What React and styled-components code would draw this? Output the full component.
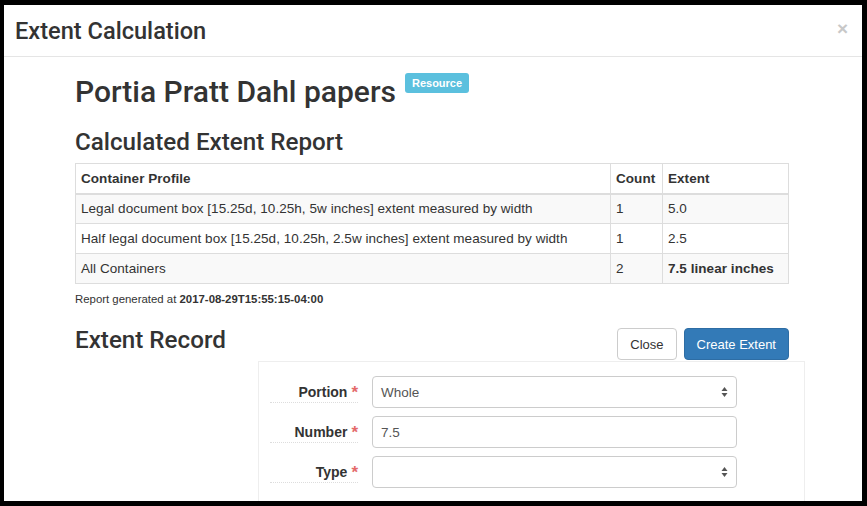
import React from 'react';
import styled, { createGlobalStyle } from 'styled-components';

const Global = createGlobalStyle`
  html, body { margin: 0; padding: 0; background: #000; }
  body { font-family: "Liberation Sans", Arial, sans-serif; color: #333; }
  * { box-sizing: border-box; }
`;

const headFont = `"Roboto", "Liberation Sans", Arial, sans-serif`;

const Frame = styled.div`
  width: 867px;
  height: 506px;
  padding: 5px 5px 5px 4px;
  background: #000;
`;

const Modal = styled.div`
  background: #fff;
  height: 100%;
  overflow: hidden;
  display: flex;
  flex-direction: column;
`;

const Header = styled.div`
  height: 52px;
  flex-shrink: 0;
  border-bottom: 1px solid #e5e5e5;
  display: flex;
  align-items: center;
  justify-content: space-between;
  padding: 0 14px 0 11px;
`;

const Title = styled.h4`
  margin: 0;
  font-family: ${headFont};
  font-size: 23.6px;
  font-weight: 500;
  color: #333;
`;

const CloseX = styled.span`
  font-size: 19px;
  font-weight: 700;
  color: #c8c8c8;
  line-height: 1;
  margin-top: -4px;
`;

const Body = styled.div`
  padding: 17px 73px 0 71px;
`;

const Heading = styled.h2`
  margin: 0;
  font-family: ${headFont};
  font-size: 30px;
  font-weight: 500;
  line-height: 36px;
  color: #333;
  display: flex;
  align-items: flex-start;
`;

const Badge = styled.span`
  margin-left: 9px;
  margin-top: -1px;
  background: #5bc0de;
  color: #fff;
  font-family: "Liberation Sans", Arial, sans-serif;
  font-size: 11px;
  font-weight: 700;
  line-height: 14px;
  padding: 3px 7px;
  border-radius: 3px;
`;

const SubHeading = styled.h3`
  margin: ${p => p.$top || 0}px 0 0;
  font-family: ${headFont};
  font-size: 24.2px;
  font-weight: 500;
  line-height: 28px;
  color: #333;
`;

const Table = styled.table`
  width: 100%;
  margin-top: 7px;
  border-collapse: collapse;
  font-size: 13.5px;
  letter-spacing: 0.05px;
  color: #333;
`;

const Th = styled.th`
  text-align: left;
  font-weight: 700;
  border: 1px solid #ddd;
  border-bottom-width: 2px;
  padding: 0 5px;
  height: 30px;
  width: ${p => p.$w || 'auto'};
`;

const Row = styled.tr`
  background: ${p => (p.$striped ? '#f9f9f9' : '#fff')};
`;

const Td = styled.td`
  border: 1px solid #ddd;
  padding: 0 5px;
  height: 30px;
  font-weight: ${p => (p.$bold ? 700 : 400)};
`;

const Note = styled.p`
  margin: 9px 0 0;
  font-size: 11.4px;
  color: #333;
  b { font-weight: 700; }
`;

const RecordBar = styled.div`
  display: flex;
  align-items: flex-start;
  justify-content: space-between;
  margin-top: 21px;
`;

const Buttons = styled.div`
  display: flex;
  gap: 7px;
  padding-top: 2px;
`;

const Button = styled.button`
  height: 32px;
  padding: 0 12px;
  font-family: inherit;
  font-size: 13px;
  border-radius: 4px;
  border: 1px solid ${p => (p.$primary ? '#2e6da4' : '#ccc')};
  background: ${p => (p.$primary ? '#337ab7' : '#fff')};
  color: ${p => (p.$primary ? '#fff' : '#333')};
`;

const Panel = styled.div`
  margin: 1px -16px 0 183px;
  border: 1px solid #eee;
  border-bottom: none;
  padding: 14px 10px 30px 11px;
  display: flex;
  flex-direction: column;
  gap: 8px;
`;

const FormRow = styled.div`
  display: flex;
  align-items: flex-start;
`;

const Label = styled.label`
  width: 88px;
  text-align: right;
  font-size: 14px;
  font-weight: 700;
  color: #333;
  line-height: 15px;
  padding: 9px 0 2px;
  border-bottom: 1px dotted #ddd;
  span { color: #e46a6a; font-size: 17px; margin-left: 4px; vertical-align: -1px; }
`;

const Field = styled.div`
  margin-left: 14px;
  width: 365px;
  height: 32px;
  border: 1px solid #ccc;
  border-radius: 4px;
  display: flex;
  align-items: center;
  padding: 0 8px 0 8px;
  font-size: 13.5px;
  color: #555;
  svg { margin-left: auto; }
`;

const Arrows = () => (
  <svg width="7" height="12" viewBox="0 0 7 12">
    <path d="M3.5 1 L6.5 5 L0.5 5 Z" fill="#555" />
    <path d="M3.5 11 L6.5 7 L0.5 7 Z" fill="#555" />
  </svg>
);

const rows = [
  { profile: 'Legal document box [15.25d, 10.25h, 5w inches] extent measured by width', count: '1', extent: '5.0' },
  { profile: 'Half legal document box [15.25d, 10.25h, 2.5w inches] extent measured by width', count: '1', extent: '2.5' },
  { profile: 'All Containers', count: '2', extent: '7.5 linear inches', bold: true },
];

const fields = [
  { label: 'Portion', value: 'Whole', select: true },
  { label: 'Number', value: '7.5' },
  { label: 'Type', value: '', select: true },
];

export default function App() {
  return (
    <>
      <Global />
      <Frame>
        <Modal>
          <Header>
            <Title>Extent Calculation</Title>
            <CloseX>×</CloseX>
          </Header>
          <Body>
            <Heading>
              Portia Pratt Dahl papers <Badge>Resource</Badge>
            </Heading>
            <SubHeading $top={18}>Calculated Extent Report</SubHeading>
            <Table>
              <thead>
                <tr>
                  <Th>Container Profile</Th>
                  <Th $w="52px">Count</Th>
                  <Th $w="126px">Extent</Th>
                </tr>
              </thead>
              <tbody>
                {rows.map((r, i) => (
                  <Row key={i} $striped={i % 2 === 0}>
                    <Td>{r.profile}</Td>
                    <Td>{r.count}</Td>
                    <Td $bold={r.bold}>{r.extent}</Td>
                  </Row>
                ))}
              </tbody>
            </Table>
            <Note>
              Report generated at <b>2017-08-29T15:55:15-04:00</b>
            </Note>
            <RecordBar>
              <SubHeading $top={0}>Extent Record</SubHeading>
              <Buttons>
                <Button>Close</Button>
                <Button $primary>Create Extent</Button>
              </Buttons>
            </RecordBar>
            <Panel>
              {fields.map(f => (
                <FormRow key={f.label}>
                  <Label>
                    {f.label}
                    <span>*</span>
                  </Label>
                  <Field>
                    {f.value}
                    {f.select && <Arrows />}
                  </Field>
                </FormRow>
              ))}
            </Panel>
          </Body>
        </Modal>
      </Frame>
    </>
  );
}
